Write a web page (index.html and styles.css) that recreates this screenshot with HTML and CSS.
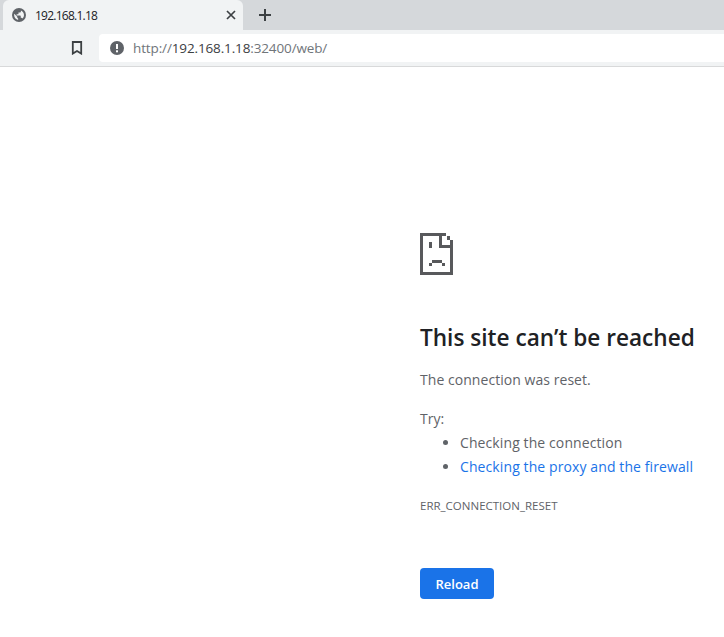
FILE: index.html
```html
<!DOCTYPE html>
<html lang="en">
<head>
<meta charset="utf-8">
<title>192.168.1.18</title>
<link rel="stylesheet" href="styles.css">
</head>
<body>
<header class="chrome">
  <div class="tabstrip">
    <div class="tab">
      <svg class="globe" width="14" height="14" viewBox="0 0 16 16"><circle cx="8" cy="8" r="8" fill="#5f6368"/><path d="M7 13.600C4.400 13.200 2.400 10.900 2.400 8c0-.5.1-.9.2-1.300L6 10v.7c0 .7.500 1.300 1 1.300zM11.900 12c-.2-.5-.7-.9-1.300-.9H10V9.300c0-.4-.3-.7-.7-.7H5.300V7.200h1.400c.4 0 .7-.3.7-.7V5.100h1.400c.8 0 1.400-.6 1.400-1.400v-.9c2 .8 3.500 2.800 3.500 5.200 0 1.500-.6 2.900-1.800 4z" fill="#f1f3f4"/></svg>
      <span class="tab-title">192.168.1.18</span>
      <svg class="tab-close" width="10" height="10" viewBox="0 0 10 10"><path d="M1 1l8 8M9 1L1 9" stroke="#3c4043" stroke-width="1.700" fill="none"/></svg>
    </div>
    <svg class="newtab" width="14" height="14" viewBox="0 0 14 14"><path d="M7 1v12M1 7h12" stroke="#3c4043" stroke-width="2" fill="none"/></svg>
  </div>
  <div class="toolbar">
    <svg class="bookmark" width="12" height="14" viewBox="0 0 12 14"><path d="M1.800 1h8.400v11.600L6 10.100l-4.200 2.500z" stroke="#3c4043" stroke-width="1.800" fill="none"/></svg>
    <div class="omnibox">
      <svg class="info" width="14" height="14" viewBox="0 0 14 14"><circle cx="7" cy="7" r="7" fill="#5f6368"/><rect x="6" y="3" width="2" height="5" fill="#fff"/><rect x="6" y="9.300" width="2" height="2" fill="#fff"/></svg>
      <span class="url">http://<span class="host">192.168.1.18</span>:32400/web/</span>
    </div>
  </div>
</header>
<main class="page">
  <svg class="sad" width="33" height="42" viewBox="0 0 33 42" shape-rendering="crispEdges" fill="#58595c"><rect width="26" height="3"/><rect width="3" height="42"/><rect y="39" width="33" height="3"/><rect x="30" y="7" width="3" height="35"/><rect x="27" y="3" width="3" height="4"/><rect x="19" y="3" width="3" height="12"/><rect x="19" y="12" width="11" height="3"/><rect x="9" y="9" width="3" height="6"/><rect x="12" y="27" width="10" height="3"/><rect x="9" y="30" width="3" height="3"/><rect x="22" y="30" width="3" height="3"/></svg>
  <h1 class="title">This site can’t be reached</h1>
  <p class="reason">The connection was reset.</p>
  <p class="try">Try:</p>
  <ul class="tips">
    <li>Checking the connection</li>
    <li><a class="link" href="#">Checking the proxy and the firewall</a></li>
  </ul>
  <div class="code">ERR_CONNECTION_RESET</div>
  <button class="reload" type="button">Reload</button>
</main>
</body>
</html>
```
FILE: styles.css
```css
* { box-sizing: border-box; }
html, body { margin: 0; height: 100%; background: #fff; overflow: hidden; }
body { font-family: "Open Sans", "Noto Sans", sans-serif; color: #5f6368; }

.chrome { border-bottom: 1px solid #d8d9da; height: 67px; }
.tabstrip { display: flex; align-items: center; height: 30px; background: #d5d8db; padding-left: 3px; }
.tab { display: flex; align-items: center; width: 240px; height: 30px; background: #f1f3f4; border-radius: 6px 6px 0 0; padding: 0 8px 0 9px; }
.globe { flex: none; }
.tab-title { flex: 1; margin-left: 9px; font-size: 12px; letter-spacing: -0.75px; color: #202124; }
.tab-close { flex: none; margin-right: -1px; }
.newtab { margin-left: 15px; }

.toolbar { display: flex; align-items: center; height: 36px; background: #f1f3f4; padding-left: 71px; }
.bookmark { flex: none; }
.omnibox { flex: 1; display: flex; align-items: center; height: 28px; margin-left: 16px; background: #fff; border-radius: 4px 0 0 4px; padding-left: 11px; }
.info { flex: none; }
.url { margin-left: 9px; font-size: 13.500px; letter-spacing: -0.13px; color: #70757a; white-space: nowrap; }
.host { color: #3c4043; }

.page { margin-left: 420px; padding-top: 166px; width: 304px; }
.sad { display: block; }
.title { margin: 46px 0 0; font-size: 22.600px; line-height: 34px; font-weight: 600; color: #202124; white-space: nowrap; }
.reason, .try { margin: 0; font-size: 14px; line-height: 24px; letter-spacing: 0.05px; white-space: nowrap; }
.reason { margin-top: 13px; }
.try { margin-top: 15px; }
.tips { margin: 0; padding: 0 0 0 40px; font-size: 14px; line-height: 24px; letter-spacing: 0.1px; white-space: nowrap; }
.tips li::marker { color: #5f6368; }
.link { color: #1a73e8; text-decoration: none; }
.code { margin-top: 19px; font-size: 11.500px; line-height: 16px; white-space: nowrap; }
.reload { display: block; margin-top: 54px; width: 74px; height: 31px; padding: 0; border: 0; border-radius: 4px; background: #1a73e8; color: #fff; font-family: inherit; font-size: 13px; font-weight: 600; }
```
